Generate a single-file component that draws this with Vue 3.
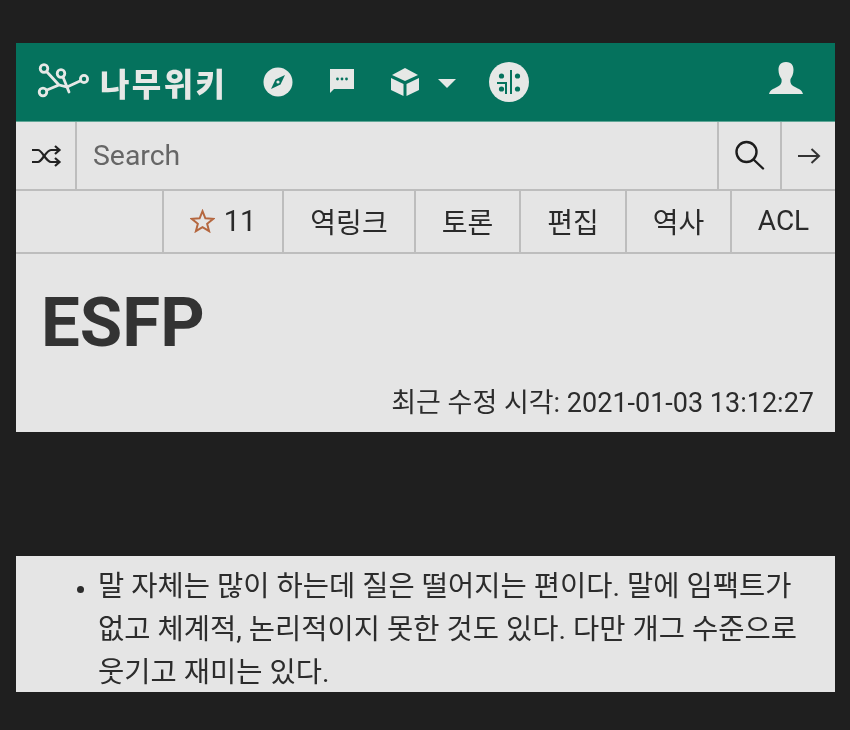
<script setup>
const tabs = [
  { label: '역링크', w: 132 },
  { label: '토론', w: 105 },
  { label: '편집', w: 106 },
  { label: '역사', w: 105 },
  { label: 'ACL', w: 105 }
]
</script>

<template>
  <main class="page">
    <section class="card">
      <header class="topbar">
        <div class="logo">
          <svg class="logo-mark" width="56" height="40" viewBox="0 0 56 40" fill="none" stroke="#e6e8e6" stroke-width="2.8">
            <circle cx="9" cy="6.5" r="3.8" />
            <circle cx="26" cy="11.5" r="3.8" />
            <circle cx="8" cy="30" r="3.8" />
            <circle cx="49" cy="17" r="3.6" />
            <path d="M12 28 L24 23 L32 25 L45 19 M24 23 L12 10 M28 15 L32 25 L34 30" stroke-linecap="round" />
          </svg>
          <span class="logo-text">나무위키</span>
        </div>
        <svg class="nav-icon compass" width="30" height="30" viewBox="0 0 30 30">
          <circle cx="15" cy="15" r="14.5" fill="#e6e8e6" />
          <path d="M22 8 L17.5 17.5 L8 22 L12.5 12.5 Z" fill="#05725d" />
          <circle cx="15" cy="15" r="1.6" fill="#e6e8e6" />
        </svg>
        <svg class="nav-icon chat" width="26" height="26" viewBox="0 0 26 26">
          <path d="M1 1 H25 V21 H5 L1 25 Z" fill="#e6e8e6" />
          <circle cx="8.5" cy="11" r="1.4" fill="#05725d" />
          <circle cx="13" cy="11" r="1.4" fill="#05725d" />
          <circle cx="17.5" cy="11" r="1.4" fill="#05725d" />
        </svg>
        <svg class="nav-icon cube" width="30" height="30" viewBox="0 0 30 30">
          <path d="M15 1 L28 8 L15 14 L2 8 Z" fill="#e6e8e6" />
          <path d="M1 11 L13.5 17 V29 L1 23 Z" fill="#e6e8e6" />
          <path d="M29 11 L16.5 17 V29 L29 23 Z" fill="#e6e8e6" />
        </svg>
        <span class="caret"></span>
        <svg class="nav-icon circuit" width="40" height="40" viewBox="0 0 40 40">
          <circle cx="20" cy="20" r="20" fill="#e6e8e6" />
          <g fill="none" stroke="#05725d" stroke-width="2">
            <path d="M22 8 V32" />
            <path d="M8 21 H17 V32" />
          </g>
          <g fill="#05725d">
            <circle cx="12.5" cy="14" r="2.6" />
            <circle cx="12.5" cy="27" r="2.6" />
            <circle cx="28.5" cy="14" r="2.6" />
            <circle cx="28.5" cy="27" r="2.6" />
          </g>
        </svg>
        <svg class="user" width="36" height="36" viewBox="0 0 36 36">
          <path d="M18 1 C12 1 10.5 5 10.5 9 C10.5 13 12 16 13.5 18 C14 22 13 24 9 26 C5 28 2 29 1 33 H35 C34 29 31 28 27 26 C23 24 22 22 22.5 18 C24 16 25.5 13 25.5 9 C25.5 5 24 1 18 1 Z" fill="#e6e8e6" />
        </svg>
      </header>

      <div class="search-row">
        <div class="cell shuffle">
          <svg width="32" height="24" viewBox="0 0 32 24" fill="none" stroke="#222" stroke-width="2.2">
            <path d="M2 6 H8 C12 6 16 18 21 18 H29" />
            <path d="M2 18 H8 C12 18 16 6 21 6 H29" />
            <path d="M25 2 L29.5 6 L25 10 M25 14 L29.5 18 L25 22" />
          </svg>
        </div>
        <div class="search-input">Search</div>
        <div class="cell search-btn">
          <svg width="32" height="32" viewBox="0 0 32 32" fill="none" stroke="#1d1d1d" stroke-width="2.4">
            <circle cx="12.5" cy="12" r="10" />
            <path d="M19.5 19.5 L29 28.5" stroke-linecap="round" />
          </svg>
        </div>
        <div class="cell go-btn">
          <svg width="24" height="18" viewBox="0 0 24 18" fill="none" stroke="#333" stroke-width="2">
            <path d="M1 9 H22 M14.5 2 L22 9 L14.5 16" />
          </svg>
        </div>
      </div>

      <nav class="tabs">
        <div class="tab star-tab">
          <svg width="25" height="24" viewBox="0 0 28 26" fill="none" stroke="#b5673f" stroke-width="2.2">
            <path d="M14 2 L17.2 10 L26 10.6 L19.2 16.2 L21.4 24.4 L14 19.9 L6.6 24.4 L8.8 16.2 L2 10.6 L10.8 10 Z" />
          </svg>
          <span>11</span>
        </div>
        <div v-for="tab in tabs" :key="tab.label" class="tab" :style="{ width: tab.w + 'px' }">{{ tab.label }}</div>
      </nav>

      <div class="head">
        <h1>ESFP</h1>
        <p class="modified">최근 수정 시각: 2021-01-03 13:12:27</p>
      </div>
    </section>

    <section class="card body-card">
      <ul>
        <li>말 자체는 많이 하는데 질은 떨어지는 편이다. 말에 임팩트가<br>없고 체계적, 논리적이지 못한 것도 있다. 다만 개그 수준으로<br>웃기고 재미는 있다.</li>
      </ul>
    </section>
  </main>
</template>

<style>
html, body { margin: 0; background: #1f1f1f; }
</style>

<style scoped>
.page {
  width: 850px;
  height: 730px;
  box-sizing: border-box;
  padding: 43px 15px 0 16px;
  background: #1f1f1f;
  overflow: hidden;
  font-family: Roboto, "Noto Sans CJK KR", sans-serif;
  color: #2c2c2c;
  filter: blur(0.4px);
}
.card { background: #e5e5e5; }
.topbar {
  height: 78px;
  background: #05725d;
  border-bottom: 1px solid #5fa696;
  display: flex;
  align-items: center;
  position: relative;
}
.logo { display: flex; align-items: center; margin-left: 19px; width: 208px; }
.logo-mark { flex: none; }
.logo-text {
  font-family: "Noto Sans CJK KR", sans-serif;
  font-weight: 900;
  font-size: 32px;
  letter-spacing: 2.4px;
  line-height: 40px;
  color: #e6e8e6;
  margin-left: 9px;
  white-space: nowrap;
}
.nav-icon { flex: none; }
.compass { margin-left: 20px; }
.chat { margin-left: 36px; margin-top: -3px; }
.cube { margin-left: 35px; }
.caret {
  width: 0;
  height: 0;
  margin: 3px 0 0 18px;
  border-left: 9px solid transparent;
  border-right: 9px solid transparent;
  border-top: 9px solid #e6e8e6;
}
.circuit { margin-left: 33px; }
.user { margin-left: auto; margin-right: 31px; margin-top: -7px; }

.search-row {
  height: 67px;
  display: flex;
  border-bottom: 2px solid #bdbdbd;
}
.cell { display: flex; align-items: center; justify-content: center; flex: none; }
.shuffle { width: 59px; border-right: 2px solid #bdbdbd; }
.search-input {
  flex: 1;
  display: flex;
  align-items: center;
  padding-left: 16px;
  font-size: 28.4px;
  color: #666;
}
.search-btn { width: 61px; border-left: 2px solid #bdbdbd; border-right: 2px solid #bdbdbd; }
.go-btn { width: 53px; }

.tabs {
  height: 61px;
  display: flex;
  justify-content: flex-end;
  border-bottom: 2px solid #bdbdbd;
}
.tab {
  box-sizing: border-box;
  display: flex;
  align-items: center;
  justify-content: center;
  border-left: 2px solid #bdbdbd;
  font-size: 28px;
  color: #2a2a2a;
  padding-bottom: 2px;
}
.star-tab { width: 120px; gap: 9px; font-size: 29px; }

.head { height: 178px; box-sizing: border-box; position: relative; }
h1 {
  margin: 0;
  padding: 31px 0 0 25px;
  font-size: 69px;
  line-height: 76px;
  font-weight: 700;
  color: #333;
}
.modified {
  margin: 0;
  padding: 25px 21px 0 0;
  text-align: right;
  font-size: 27px;
  line-height: 34px;
  color: #2c2c2c;
}

.body-card { margin-top: 124px; height: 136px; overflow: hidden; }
ul { margin: 0; padding: 9px 0 0 82px; }
li {
  font-size: 28.5px;
  line-height: 43px;
  color: #2c2c2c;
  white-space: nowrap;
}
li::marker { font-size: 24px; }
</style>
